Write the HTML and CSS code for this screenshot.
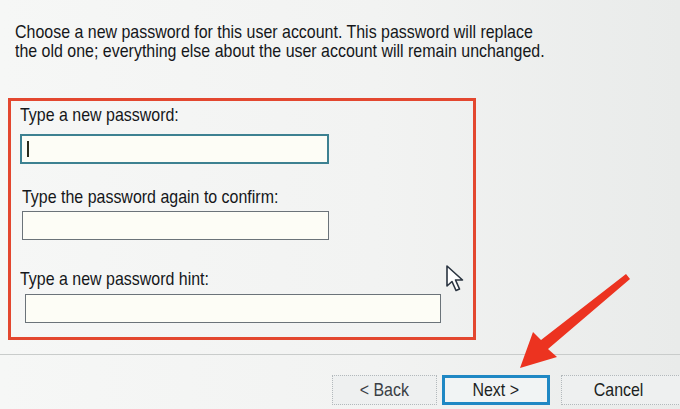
FILE: index.html
```html
<!DOCTYPE html>
<html lang="en">
<head>
<meta charset="utf-8">
<title>Change password</title>
<link rel="stylesheet" href="styles.css">
</head>
<body>
<div class="page">
  <p class="intro"><span class="t">Choose a new password for this user account. This password will replace</span><br><span class="t">the old one; everything else about the user account will remain unchanged.</span></p>

  <div class="box">
    <div class="field f1">
      <label class="label"><span class="t">Type a new password:</span></label>
      <div class="input focused w1"><span class="caret"></span></div>
    </div>
    <div class="field f2">
      <label class="label"><span class="t">Type the password again to confirm:</span></label>
      <div class="input w2"></div>
    </div>
    <div class="field f3">
      <label class="label"><span class="t">Type a new password hint:</span></label>
      <div class="input w3"></div>
    </div>
  </div>

  <div class="sep"></div>

  <div class="buttons">
    <div class="btn back"><span class="t c">&lt; Back</span></div>
    <div class="btn next"><span class="t c">Next &gt;</span></div>
    <div class="btn cancel"><span class="t c">Cancel</span></div>
  </div>

  <svg class="cursor" width="22" height="30" viewBox="0 0 22 30">
    <path d="M2 2 L2 22 L7 17.5 L11 26.5 L14.5 25 L10.5 16 L17.5 16 Z" fill="#ffffff" stroke="#2a3440" stroke-width="1.6" stroke-linejoin="round"/>
  </svg>

  <svg class="arrow" width="680" height="409" viewBox="0 0 680 409">
    <path d="M630 279 L626 274 L541 340 L533 332 L520 368 L557 357 L548 349 Z" fill="#ec3320"/>
  </svg>
</div>
</body>
</html>
```

FILE: styles.css
```css
html, body {
  margin: 0;
  padding: 0;
}

body {
  font-family: "Liberation Sans", Arial, sans-serif;
  color: #1b1d20;
}

.page {
  position: relative;
  width: 680px;
  height: 409px;
  overflow: hidden;
  background: linear-gradient(90deg, #f6f7f6 0%, #f2f3f2 55%, #e9ebea 100%);
  display: flex;
  flex-direction: column;
}

/* the screen photo is horizontally compressed: narrow the glyphs */
.t {
  display: inline-block;
  white-space: nowrap;
  transform: scaleX(0.84);
  transform-origin: left center;
}

.t.c {
  transform-origin: center center;
}

.intro {
  margin: 0;
  padding: 22px 0 0 15px;
  font-size: 19px;
  line-height: 19px;
  color: #15171a;
}

.box {
  margin: 38px 0 0 8px;
  width: 462px;
  height: 236px;
  border: 3px solid #e3472f;
  display: flex;
  flex-direction: column;
}

.field {
  display: flex;
  flex-direction: column;
}

.label {
  font-size: 19px;
  line-height: 22px;
  color: #15171a;
}

.f1 { padding: 3px 0 0 9px; }
.f1 .label { margin-bottom: 8px; }

.f2 { padding: 22px 0 0 11px; }
.f2 .label { margin-bottom: 3px; }

.f3 { padding: 28px 0 0 9px; }
.f3 .label { margin-bottom: 4px; }

.input {
  box-sizing: border-box;
  height: 29px;
  background: #fdfdf6;
  border: 1px solid #6b7379;
  display: flex;
  align-items: center;
}

.input.focused {
  height: 30px;
  border: 2px solid #3d8191;
}

.w1 { width: 309px; }
.w2 { width: 307px; }
.w3 { width: 416px; margin-left: 5px; }

.caret {
  width: 1.5px;
  height: 16px;
  margin-left: 5px;
  background: #2b2b1c;
}

.sep {
  margin-top: 14px;
  height: 0;
  border-top: 1px solid #c9cccb;
}

.buttons {
  display: flex;
  margin-top: 20px;
  padding-left: 332px;
  gap: 5px;
}

.btn {
  box-sizing: border-box;
  height: 30px;
  display: flex;
  align-items: center;
  justify-content: center;
  font-size: 19px;
  color: #1c1f22;
  background: #eef0f0;
  border: 1px dotted #b3b9bc;
  flex: none;
}

.back {
  width: 105px;
  color: #3a4045;
}

.next {
  width: 108px;
  border: 3px solid #1f88c4;
  background: #f1f4f4;
}

.cancel {
  width: 140px;
  margin-left: 6px;
  padding-right: 24px;
}

.cursor {
  position: absolute;
  left: 445px;
  top: 264px;
}

.arrow {
  position: absolute;
  left: 0;
  top: 0;
  pointer-events: none;
}
```
